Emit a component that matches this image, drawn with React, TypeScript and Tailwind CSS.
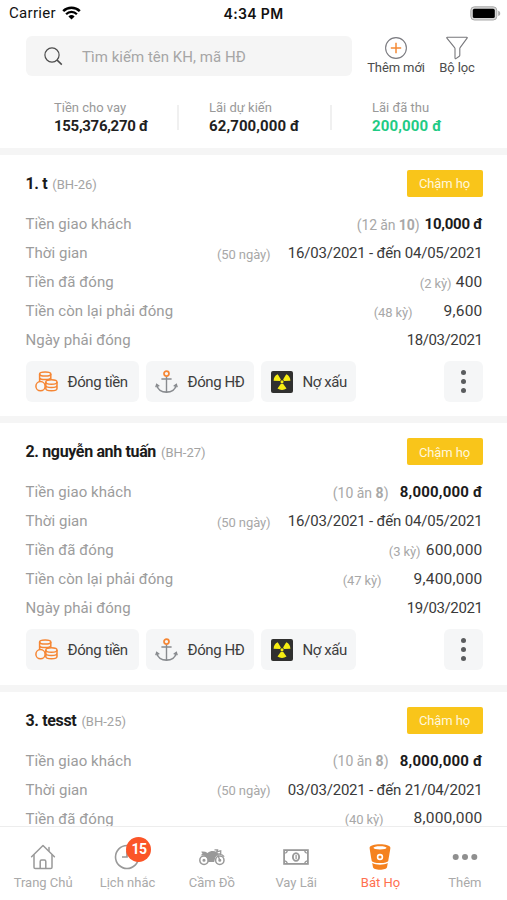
import type { ReactNode } from 'react';
import clsx from 'clsx';

type Row = {
  label: string;
  note?: ReactNode;
  noteClass?: string;
  value: string;
  valueClass: string;
};

type Contract = {
  id: number;
  title: string;
  code: string;
  rows: Row[];
};

const boldValue = 'text-[15px] font-bold text-[#1b1b1b]';
const rangeValue = 'w-[195px] ml-[12px] text-[15px] tracking-[-0.2px] text-[#3a3a3a]';
const dateValue = 'w-[76px] text-[15px] tracking-[-0.4px] text-[#3a3a3a]';
const numberValue = 'pb-[1px] text-[15.5px] tracking-[0.2px] text-[#3a3a3a]';

const contracts: Contract[] = [
  {
    id: 1,
    title: '1. t',
    code: '(BH-26)',
    rows: [
      { label: 'Tiền giao khách', note: <>(12 ăn <b>10</b>)</>, noteClass: 'text-[14px] tracking-[-0.1px]', value: '10,000 đ', valueClass: clsx(boldValue, 'w-[58px] tracking-[-0.25px]') },
      { label: 'Thời gian', note: '(50 ngày)', value: '16/03/2021 - đến 04/05/2021', valueClass: rangeValue },
      { label: 'Tiền đã đóng', note: '(2 kỳ)', value: '400', valueClass: clsx(numberValue, 'w-[26px]') },
      { label: 'Tiền còn lại phải đóng', note: '(48 kỳ)', value: '9,600', valueClass: clsx(numberValue, 'w-[39px] ml-[26px]') },
      { label: 'Ngày phải đóng', value: '18/03/2021', valueClass: dateValue },
    ],
  },
  {
    id: 2,
    title: '2. nguyễn anh tuấn',
    code: '(BH-27)',
    rows: [
      { label: 'Tiền giao khách', note: <>(10 ăn <b>8</b>)</>, noteClass: 'text-[14px]', value: '8,000,000 đ', valueClass: clsx(boldValue, 'w-[83px] ml-[6px] tracking-[0.17px]') },
      { label: 'Thời gian', note: '(50 ngày)', value: '16/03/2021 - đến 04/05/2021', valueClass: rangeValue },
      { label: 'Tiền đã đóng', note: '(3 kỳ)', value: '600,000', valueClass: clsx(numberValue, 'w-[57px]') },
      { label: 'Tiền còn lại phải đóng', note: '(47 kỳ)', value: '9,400,000', valueClass: clsx(numberValue, 'w-[70px] ml-[26px]') },
      { label: 'Ngày phải đóng', value: '19/03/2021', valueClass: dateValue },
    ],
  },
  {
    id: 3,
    title: '3. tesst',
    code: '(BH-25)',
    rows: [
      { label: 'Tiền giao khách', note: <>(10 ăn <b>8</b>)</>, noteClass: 'text-[14px]', value: '8,000,000 đ', valueClass: clsx(boldValue, 'w-[83px] ml-[6px] tracking-[0.17px]') },
      { label: 'Thời gian', note: '(50 ngày)', value: '03/03/2021 - đến 21/04/2021', valueClass: rangeValue },
      { label: 'Tiền đã đóng', note: '(40 kỳ)', value: '8,000,000', valueClass: clsx(numberValue, 'w-[70px] ml-[24px]') },
    ],
  },
];

function WifiIcon() {
  return (
    <svg width="19" height="14" viewBox="0 0 19 14" fill="none" stroke="#000">
      <path d="M1.2 5.1a11.8 11.8 0 0 1 16.6 0" strokeWidth="2.5" />
      <path d="M4.1 8.2a7.6 7.6 0 0 1 10.8 0" strokeWidth="2.3" />
      <path d="M9.5 13.6 6.4 10.5a4.5 4.5 0 0 1 6.2 0z" fill="#000" stroke="none" />
    </svg>
  );
}

function BatteryIcon() {
  return (
    <svg width="31" height="15" viewBox="0 0 31 15">
      <rect x="0.8" y="0.8" width="26" height="13.2" rx="3.6" fill="#d6d6d6" stroke="#a9a9a9" strokeWidth="1" />
      <rect x="2.8" y="2.8" width="22" height="9.2" rx="1.6" fill="#000" />
      <path d="M28.2 4.8c1.8.6 2 1.7 2 2.6s-.2 2-2 2.6z" fill="#a9a9a9" />
    </svg>
  );
}

function SearchIcon() {
  return (
    <svg width="19" height="19" viewBox="0 0 19 19" fill="none" stroke="#4d4d4d" strokeWidth="1.2">
      <circle cx="8" cy="8" r="7.1" />
      <path d="m13.1 13.1 4.7 4.5" strokeWidth="1.5" />
    </svg>
  );
}

function AddIcon() {
  return (
    <svg width="24" height="24" viewBox="0 0 24 24" fill="none">
      <circle cx="12" cy="12" r="10.4" stroke="#7b7b80" strokeWidth="1.1" />
      <path d="M12 6.8v10.4M6.8 12h10.4" stroke="#f58a36" strokeWidth="1.5" />
    </svg>
  );
}

function FilterIcon() {
  return (
    <svg width="24" height="24" viewBox="0 0 24 24" fill="none" stroke="#77777b" strokeWidth="1.1" strokeLinejoin="round">
      <path d="M2.3 1.2h19.4c.5 0 .8.6.4 1l-7 9.5c-.2.3-.3.6-.3 1v6.6c0 .4-.2.7-.5.9l-3.4 2.4c-.4.3-.9 0-.9-.5v-9.4c0-.4-.1-.7-.4-1L1.9 2.2c-.4-.4-.1-1 .4-1z" />
    </svg>
  );
}

function CoinsIcon() {
  return (
    <svg width="23" height="21" viewBox="0 0 23 21" fill="none" stroke="#f58634" strokeWidth="1.5">
      <ellipse cx="10.2" cy="3" rx="5.6" ry="2.1" />
      <path d="M4.6 3v7.6M15.8 3v5.4M4.6 6.4c0 1.2 2.5 2.1 5.6 2.1s5.600-.9 5.600-2.100" />
      <ellipse cx="16.400" cy="11" rx="5.600" ry="2.300" />
      <path d="M10.800 11v6.500c0 1.200 2.500 2.300 5.600 2.300s5.600-1.100 5.600-2.300V11M10.800 14.200c0 1.200 2.500 2.300 5.600 2.300s5.600-1.100 5.600-2.300" />
      <circle cx="5.500" cy="15.200" r="4.600" fill="#f7f8f9" />
    </svg>
  );
}

function AnchorIcon() {
  return (
    <svg width="23" height="24" viewBox="0 0 23 24" fill="none" stroke="#888b8f" strokeWidth="1.4">
      <path d="M11.5 6.5v16M6.4 9h10.2" />
      <path d="M1.800 15.200c.8 4.300 4.700 7 9.700 7s8.900-2.700 9.700-7" strokeWidth="1.700" />
      <path d="M.8 17.300l.9-3 2.600 1.900M22.200 17.300l-.9-3-2.600 1.900" />
      <circle cx="11.500" cy="3.600" r="2.500" stroke="#f58634" strokeWidth="1.700" />
    </svg>
  );
}

function RadiationIcon() {
  return (
    <svg width="22" height="22" viewBox="0 0 22 22">
      <rect width="22" height="22" rx="2" fill="#30302f" />
      <g fill="#f7ee13">
        <path d="M9 10.100 2.600 9.700C2.700 6.800 4.200 4.500 6.600 3.300c1.600 1.900 2.500 4.100 3.300 5.500z" />
        <path d="M13 10.100l6.400-.4c-.1-2.900-1.600-5.200-4-6.400-1.600 1.900-2.500 4.100-3.300 5.500z" />
        <path d="M9.900 12.800h2.200l3.400 4.700c-2.700 1.900-6.300 1.900-9 0z" />
        <circle cx="11" cy="10.700" r="1.500" />
      </g>
    </svg>
  );
}

function HomeIcon() {
  return (
    <svg width="26" height="26" viewBox="0 0 26 26" fill="none" stroke="#999" strokeWidth="1.5" strokeLinejoin="round" strokeLinecap="round">
      <path d="M1.600 12.800 13 1.500l11.400 11.300" />
      <path d="M4 11v12.200c0 .8.500 1.300 1.300 1.300h15.400c.8 0 1.300-.5 1.300-1.300V11" />
      <path d="M10.200 24.300v-6.800c0-1 .5-1.500 1.400-1.500h2.800c.9 0 1.400.5 1.400 1.500v6.800M19 3.500v3" />
    </svg>
  );
}

function ClockIcon() {
  return (
    <svg width="26" height="26" viewBox="0 0 26 26" fill="none" stroke="#999">
      <circle cx="13" cy="13" r="11.5" strokeWidth="1.6" />
      <path d="M13 7v6H8" strokeWidth="1.7" />
    </svg>
  );
}

function MotorcycleIcon() {
  return (
    <svg width="26" height="18" viewBox="0 0 26 18" fill="none" stroke="#999" strokeWidth="1.5">
      <circle cx="5" cy="12.200" r="4.200" />
      <circle cx="20.800" cy="12.200" r="4.200" />
      <circle cx="5" cy="12.200" r=".8" fill="#999" />
      <circle cx="20.800" cy="12.200" r=".8" fill="#999" />
      <path d="M15.500 1.800h3l-.8 2.200 3.100 8.200M18.200 6.400c2.600-.6 5.300.1 7 2.200M18.200 3.600l3.500-.8v2.900l-2.600.3" strokeWidth="1.300" />
      <path d="M2.200 3.800c2.200-.5 4.300 0 6.500 1.100 2.100-2.100 6.300-2.500 8.900-1l.9 3.200-2.200 2.500-1.100 4.300H8.800c0-2.900-1.300-5-3.700-6.400L1.500 7.200l2-1.500z" fill="#999" stroke="none" />
    </svg>
  );
}

function MoneyIcon() {
  return (
    <svg width="26" height="16" viewBox="0 0 26 16" fill="none" stroke="#999" strokeWidth="1.8">
      <rect x="1.100" y="1.100" width="23.800" height="13.800" />
      <path d="M1 4.200C3 4.200 4.300 3 4.300 1M25 4.200c-2 0-3.300-1.200-3.300-3.200M1 11.800c2 0 3.300 1.200 3.300 3.200M25 11.800c-2 0-3.300 1.200-3.300 3.200" strokeWidth="1.300" />
      <ellipse cx="13" cy="8" rx="3.100" ry="3.900" strokeWidth="1.900" />
      <path d="M13.100 5.700v4.600" strokeWidth="1.300" />
    </svg>
  );
}

function BucketIcon() {
  return (
    <svg width="22" height="26" viewBox="0 0 22 26">
      <path fill="#f5821f" fillRule="evenodd" d="M11 .3C16.500.3 21.400 1.500 21.400 3.800c0 1-1.500 9.600-2.100 13-.3 1.400-4 2.300-8.300 2.300s-8-.9-8.300-2.300C2.100 13.400.6 4.800.6 3.800.6 1.500 5.500.3 11 .3zm0 1.900c-3.900 0-6.500.7-6.500 1.600s2.600 1.600 6.500 1.600 6.500-.7 6.500-1.600-2.600-1.600-6.500-1.600zm0 7.600a3.200 3.200 0 1 0 0 6.400 3.200 3.200 0 0 0 0-6.400z" />
      <circle cx="11" cy="13" r="1.600" fill="#f5821f" />
      <path fill="#f5821f" d="M3.200 19c2.100 1.200 4.800 1.700 7.800 1.700s5.700-.5 7.800-1.700l-.8 4.300c-.3 1.500-3.200 2.500-7 2.500s-6.700-1-7-2.500z" />
    </svg>
  );
}

function DotsIcon() {
  return (
    <svg width="26" height="8" viewBox="0 0 26 8" fill="#8f8f8f">
      <circle cx="3.700" cy="4" r="3" />
      <circle cx="13" cy="4" r="3" />
      <circle cx="22.300" cy="4" r="3" />
    </svg>
  );
}

function StatusBar() {
  return (
    <div className="grid h-[28px] shrink-0 grid-cols-3 items-center pl-[9px] pr-[6px] text-[15px] text-[#111]">
      <div className="flex items-center gap-[6px] pb-[2px]">
        <span className="pt-[1px] tracking-[0.3px]">Carrier</span>
        <WifiIcon />
      </div>
      <div className="pb-[2px] pr-[3px] text-center font-['Inter'] text-[14px] font-semibold tracking-[0.35px]">4:34 PM</div>
      <div className="flex justify-end pb-[2px]">
        <BatteryIcon />
      </div>
    </div>
  );
}

function SearchHeader() {
  return (
    <div className="flex h-[49px] shrink-0 items-start pl-[26px] pt-[8px]">
      <div className="flex h-[40px] w-[326px] items-center gap-[19px] rounded-[6px] bg-[#f5f5f5] pl-[18px]">
        <SearchIcon />
        <span className="pt-[2px] text-[15px] tracking-[0.03px] text-[#a6a6a6]">Tìm kiếm tên KH, mã HĐ</span>
      </div>
      <div className="ml-[14px] flex w-[60px] flex-col items-center text-[13px] leading-[15px] text-[#4c4c4c]">
        <AddIcon />
        <span className="whitespace-nowrap tracking-[-0.1px]">Thêm mới</span>
      </div>
      <div className="ml-[10px] flex w-[42px] flex-col items-center text-[13px] leading-[15px] text-[#4c4c4c]">
        <FilterIcon />
        <span className="whitespace-nowrap tracking-[-0.1px]">Bộ lọc</span>
      </div>
    </div>
  );
}

function Summary() {
  return (
    <div className="flex h-[71px] shrink-0 items-center pl-[54px] pt-[9px] text-[13px] leading-[18px] text-[#999]">
      <div className="w-[123px]">
        <p>Tiền cho vay</p>
        <p className="text-[15px] font-bold tracking-[-0.3px] text-[#1f1f1f]">155,376,270 đ</p>
      </div>
      <div className="h-[25px] w-[2px] bg-[#f0f0f0]" />
      <div className="ml-[30px] w-[121px]">
        <p>Lãi dự kiến</p>
        <p className="text-[15px] font-bold tracking-[0.1px] text-[#1f1f1f]">62,700,000 đ</p>
      </div>
      <div className="h-[25px] w-[2px] bg-[#f0f0f0]" />
      <div className="ml-[40px]">
        <p>Lãi đã thu</p>
        <p className="text-[15px] font-bold tracking-[0.15px] text-[#1fcb85]">200,000 đ</p>
      </div>
    </div>
  );
}

function ActionButton({ icon, label, className }: { icon: ReactNode; label: string; className: string }) {
  return (
    <button className={clsx('flex h-[41px] items-center rounded-[6px] bg-[#f5f6f7] pl-[9px] text-[15px] text-[#3e3e3e]', className)}>
      <span className="flex w-[24px] justify-center">{icon}</span>
      <span className="ml-[9px] whitespace-nowrap pt-[1px] tracking-[-0.4px]">{label}</span>
    </button>
  );
}

function ContractCard({ contract }: { contract: Contract }) {
  return (
    <section className="h-[268.3px] shrink-0 border-t-[7.5px] border-[#f5f5f5] bg-white pl-[25.5px] pr-[24.5px]">
      <div className="flex h-[55px] items-center justify-between pt-[2px]">
        <div className="flex items-baseline pt-[1px]">
          <h2 className="text-[16px] font-bold tracking-[-0.35px] text-[#1b1b1b]">{contract.title}</h2>
          <span className="ml-[5px] text-[13px] text-[#a3a3a3]">{contract.code}</span>
        </div>
        <span className="flex h-[27px] w-[76px] items-center justify-center rounded-[2px] bg-[#f9c51a] pt-[1px] text-[13px] tracking-[-0.1px] text-[#fff7dc]">
          Chậm họ
        </span>
      </div>
      {contract.rows.map((row) => (
        <div key={row.label} className="flex h-[29px] items-center text-[15px] leading-[29px]">
          <span className="grow whitespace-nowrap tracking-[0.05px] text-[#9c9c9c]">{row.label}</span>
          {row.note && (
            <span className={clsx('mr-[5px] whitespace-nowrap pt-[1px] text-[#a8a8a8]', row.noteClass ?? 'text-[13px] tracking-[-0.1px]')}>
              {row.note}
            </span>
          )}
          <span className={clsx('flex justify-end whitespace-nowrap', row.valueClass)}>{row.value}</span>
        </div>
      ))}
      {contract.rows.length === 5 && (
        <div className="mt-[6px] flex">
          <ActionButton icon={<CoinsIcon />} label="Đóng tiền" className="w-[113px]" />
          <ActionButton icon={<AnchorIcon />} label="Đóng HĐ" className="ml-[7px] w-[108px]" />
          <ActionButton icon={<RadiationIcon />} label="Nợ xấu" className="ml-[7px] w-[95px]" />
          <button className="ml-auto flex h-[41px] w-[39px] flex-col items-center justify-center gap-[4px] rounded-[6px] bg-[#f5f6f7]">
            <span className="h-[5px] w-[5px] rounded-full bg-[#5a5c5e]" />
            <span className="h-[5px] w-[5px] rounded-full bg-[#5a5c5e]" />
            <span className="h-[5px] w-[5px] rounded-full bg-[#5a5c5e]" />
          </button>
        </div>
      )}
    </section>
  );
}

const tabs = [
  { label: 'Trang Chủ', icon: <HomeIcon /> },
  { label: 'Lịch nhắc', icon: <ClockIcon />, badge: 15 },
  { label: 'Cầm Đồ', icon: <MotorcycleIcon /> },
  { label: 'Vay Lãi', icon: <MoneyIcon /> },
  { label: 'Bát Họ', icon: <BucketIcon />, active: true },
  { label: 'Thêm', icon: <DotsIcon /> },
];

function TabBar() {
  return (
    <nav className="grid h-[74px] shrink-0 grid-cols-6 border-t border-[#ededed] bg-white pl-[1px] pt-[16px]">
      {tabs.map((tab) => (
        <div key={tab.label} className="flex flex-col items-center">
          <div className="relative flex h-[27px] items-center justify-center">
            {tab.icon}
            {tab.badge && (
              <span className="absolute -top-[6px] left-[12px] flex h-[25px] w-[25px] items-center justify-center rounded-full bg-[#fb5528] text-[14px] font-bold tracking-[-0.5px] text-white">
                {tab.badge}
              </span>
            )}
          </div>
          <span className={clsx('mt-[4px] whitespace-nowrap text-[13px] leading-[18px]', tab.active ? 'text-[#ff704f]' : 'text-[#aaa]')}>
            {tab.label}
          </span>
        </div>
      ))}
    </nav>
  );
}

function App() {
  return (
    <div className="flex h-screen flex-col overflow-hidden bg-white font-['Roboto',sans-serif]">
      <StatusBar />
      <SearchHeader />
      <Summary />
      <main className="flex min-h-0 flex-1 flex-col overflow-hidden">
        {contracts.map((contract) => (
          <ContractCard key={contract.id} contract={contract} />
        ))}
      </main>
      <TabBar />
    </div>
  );
}

export default App;
